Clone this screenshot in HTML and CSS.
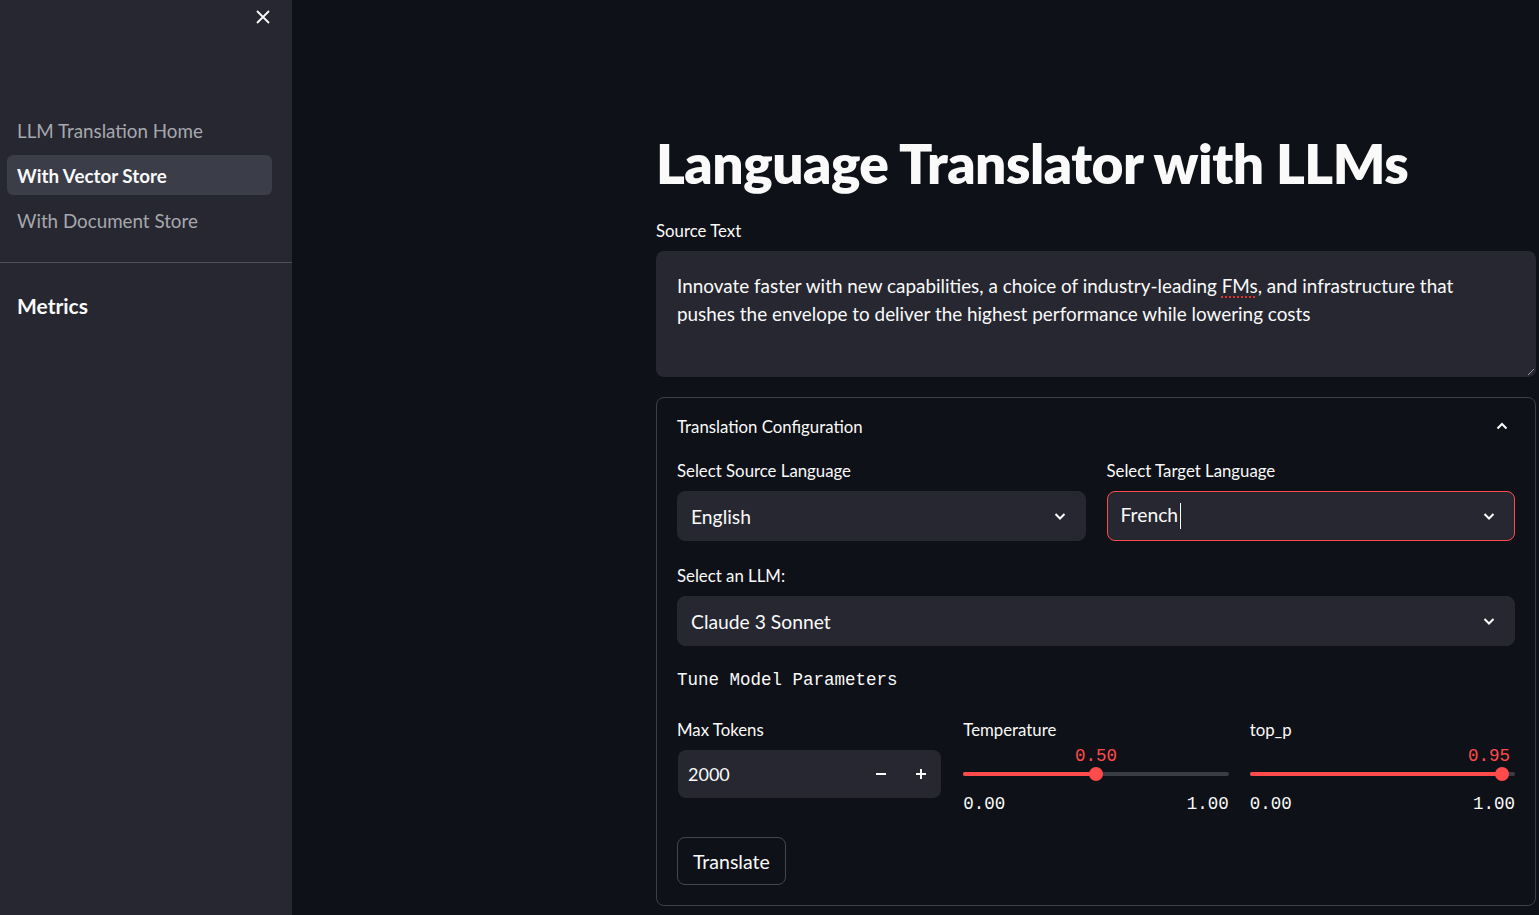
FILE: index.html
```html
<!DOCTYPE html>
<html>
<head>
<meta charset="utf-8">
<link rel="stylesheet" href="styles.css">
</head>
<body>
<div class="app">
  <aside class="sidebar">
    <div class="sb-top">
      <svg class="close" width="16" height="16" viewBox="0 0 16 16"><path d="M2 2 L14 14 M14 2 L2 14" stroke="#fafafa" stroke-width="1.8" fill="none"/></svg>
    </div>
    <nav class="nav">
      <div class="nav-item">LLM Translation Home</div>
      <div class="nav-item active">With Vector Store</div>
      <div class="nav-item">With Document Store</div>
    </nav>
    <div class="sb-sep"></div>
    <div class="sb-content">
      <h2 class="metrics">Metrics</h2>
    </div>
  </aside>
  <main class="main">
    <div class="block">
      <h1 class="title">Language Translator with LLMs</h1>
      <div class="label">Source Text</div>
      <div class="textarea">
        <div class="ta-line"><span>Innovate faster with new capabilities, a choice of industry-leading </span><span class="spell">FMs</span><span>, and infrastructure that</span></div>
        <div class="ta-line">pushes the envelope to deliver the highest performance while lowering costs</div>
        <span class="grip"></span>
      </div>
      <div class="expander">
        <div class="exp-head">
          <span>Translation Configuration</span>
          <svg width="14" height="14" viewBox="0 0 14 14"><path d="M2.5 9.5 L7 5 L11.5 9.5" stroke="#fafafa" stroke-width="2" fill="none"/></svg>
        </div>
        <div class="exp-body">
          <div class="row2">
            <div class="field">
              <div class="label">Select Source Language</div>
              <div class="select"><span>English</span><svg width="14" height="14" viewBox="0 0 14 14"><path d="M2.5 5 L7 9.5 L11.5 5" stroke="#fafafa" stroke-width="2" fill="none"/></svg></div>
            </div>
            <div class="field">
              <div class="label">Select Target Language</div>
              <div class="select focus"><span>French<i class="caret"></i></span><svg width="14" height="14" viewBox="0 0 14 14"><path d="M2.5 5 L7 9.5 L11.5 5" stroke="#fafafa" stroke-width="2" fill="none"/></svg></div>
            </div>
          </div>
          <div class="field">
            <div class="label">Select an LLM:</div>
            <div class="select"><span>Claude 3 Sonnet</span><svg width="14" height="14" viewBox="0 0 14 14"><path d="M2.5 5 L7 9.5 L11.5 5" stroke="#fafafa" stroke-width="2" fill="none"/></svg></div>
          </div>
          <div class="mono-head">Tune Model Parameters</div>
          <div class="row3">
            <div class="field">
              <div class="label">Max Tokens</div>
              <div class="number">
                <span class="num-val">2000</span>
                <span class="num-btns">
                  <svg width="12" height="12" viewBox="0 0 12 12"><path d="M1 6 H11" stroke="#fafafa" stroke-width="2"/></svg>
                  <svg width="12" height="12" viewBox="0 0 12 12"><path d="M1 6 H11 M6 1 V11" stroke="#fafafa" stroke-width="2"/></svg>
                </span>
              </div>
            </div>
            <div class="field">
              <div class="label">Temperature</div>
              <div class="slider">
                <div class="s-val-row"><span class="s-val" style="left:50%">0.50</span></div>
                <div class="track"><div class="fill" style="width:50%"></div><div class="thumb" style="left:50%"></div></div>
                <div class="s-minmax"><span>0.00</span><span>1.00</span></div>
              </div>
            </div>
            <div class="field">
              <div class="label">top_p</div>
              <div class="slider">
                <div class="s-val-row"><span class="s-val end" style="left:95%">0.95</span></div>
                <div class="track"><div class="fill" style="width:95%"></div><div class="thumb" style="left:95%"></div></div>
                <div class="s-minmax"><span>0.00</span><span>1.00</span></div>
              </div>
            </div>
          </div>
          <button class="btn">Translate</button>
        </div>
      </div>
    </div>
  </main>
</div>
</body>
</html>
```
FILE: styles.css
```css
* { box-sizing: border-box; }
html, body { margin: 0; padding: 0; height: 100%; }
body {
  background: #0e1117;
  color: #fafafa;
  font-family: "Lato", "Noto Sans", sans-serif;
  overflow: hidden;
}
.app { display: flex; height: 915px; }
.sidebar {
  width: 292px;
  flex: none;
  background: #262730;
  display: flex;
  flex-direction: column;
}
.sb-top { height: 110px; display: flex; justify-content: flex-end; align-items: flex-start; padding: 9px 21px 0 0; }
.nav { display: flex; flex-direction: column; gap: 5px; padding: 0 20px 0 7px; }
.nav-item {
  height: 40px;
  display: flex;
  align-items: center;
  padding-left: 10px;
  font-size: 18.8px;
  color: #a7a8ae;
  border-radius: 6px;
}
.nav-item.active { background: #3b3d48; color: #fafafa; font-weight: 700; }
.sb-sep { height: 1px; background: #50525b; margin-top: 22px; }
.sb-content { padding: 27px 17px; }
.metrics { margin: 0; font-size: 21px; font-weight: 700; line-height: 32px; }

.main { flex: 1; }
.block { width: 880px; margin-left: 364px; padding-top: 128px; }
.title {
  margin: 0;
  font-size: 55px;
  font-weight: 800;
  line-height: 70px;
  letter-spacing: -0.5px;
}
.label { font-size: 16.8px; line-height: 24px; margin-bottom: 8px; }
.title + .label { margin-top: 21px; }
.textarea {
  position: relative;
  height: 126px;
  background: #262730;
  border-radius: 8px;
  padding: 21px 40px 0 21px;
  font-size: 18.9px;
  line-height: 28px;
}
.ta-line { white-space: nowrap; }
.spell { text-decoration: underline dotted #e0352b; text-decoration-thickness: 2px; text-underline-offset: 3px; }
.grip { position: absolute; right: 2px; bottom: 2px; width: 6px; height: 6px;
  background: linear-gradient(135deg, transparent 45%, #9a9ba0 45%, #9a9ba0 55%, transparent 55%); }
.expander {
  margin-top: 20px;
  border: 1px solid #3e4049;
  border-radius: 8px;
  height: 509px;
}
.exp-head {
  display: flex; justify-content: space-between; align-items: center;
  height: 61px; padding: 0 26px 5px 20px;
  font-size: 16.8px;
}
.exp-body { padding: 0 20px 0 20px; display: flex; flex-direction: column; }
.row2 { display: grid; grid-template-columns: 1fr 1fr; gap: 21px; }
.row3 { display: grid; grid-template-columns: 1fr 1fr 1fr; gap: 21px; }
.field { display: flex; flex-direction: column; }
.exp-body > .row2 + .field { margin-top: 23px; }
.select {
  height: 50px;
  background: #262730;
  border-radius: 8px;
  border: 1px solid #262730;
  display: flex; align-items: center; justify-content: space-between;
  padding: 0 18px 0 13px;
  font-size: 19.3px;
}
.select.focus { border-color: #ff4b4b; }
.caret { display: inline-block; width: 1px; height: 26px; background: #fafafa; vertical-align: middle; margin-left: 2px; margin-top: -4px; }
.mono-head {
  font-family: "Liberation Mono", monospace;
  font-size: 17.5px;
  margin-top: 22px;
  line-height: 24px;
  margin-bottom: 26px;
}
.number {
  height: 48px; background: #262730; border-radius: 8px;
  margin-left: 1px; margin-right: 1px;
  display: flex; align-items: center; justify-content: space-between;
  padding: 0 14px 0 10px; font-size: 18px;
}
.num-btns { display: flex; gap: 28px; }
.slider { display: flex; flex-direction: column; }
.s-val-row { position: relative; height: 19px; }
.s-val {
  position: absolute; top: -4px; transform: translateX(-50%);
  font-family: "Liberation Mono", monospace; font-size: 17.5px; color: #ff4b4b;
}
.s-val.end { transform: translateX(-80%); }
.track { position: relative; height: 4px; margin-top: 3px; background: #3a3c46; border-radius: 2px; }
.fill { height: 4px; background: #ff4b4b; border-radius: 2px; }
.thumb { position: absolute; top: -5px; width: 14px; height: 14px; margin-left: -7px; border-radius: 50%; background: #ff4b4b; }
.s-minmax {
  display: flex; justify-content: space-between; margin-top: 18px;
  font-family: "Liberation Mono", monospace; font-size: 17.5px;
}
.btn {
  margin-top: 23px;
  align-self: flex-start;
  background: transparent;
  color: #fafafa;
  border: 1px solid #45474f;
  border-radius: 8px;
  height: 48px;
  padding: 0 15px;
  font-family: inherit;
  font-size: 19.5px;
}
```
